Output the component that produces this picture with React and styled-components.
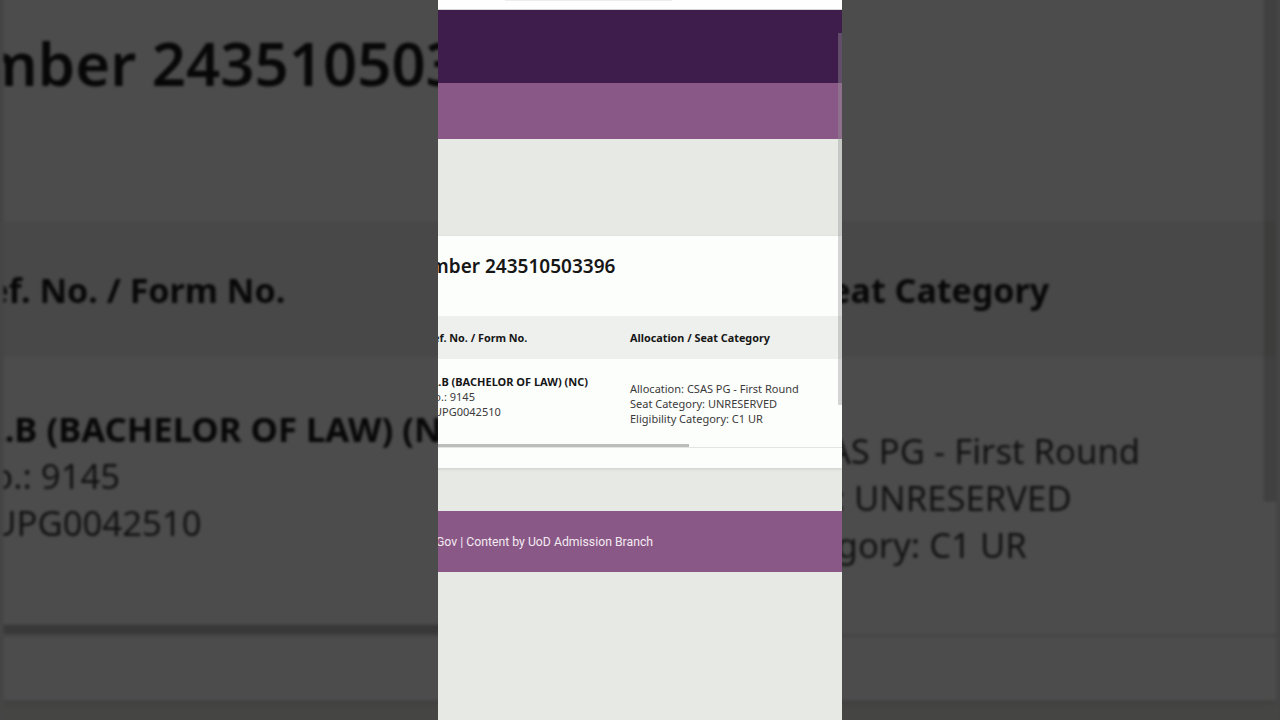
import React from 'react';
import styled, { createGlobalStyle } from 'styled-components';

// Seat allocation page, shown as a phone recording: a sharp column in the
// middle and the same column blown up and dimmed behind it.

const allocation = {
  formNumber: '243510503396',
  course: 'LL.B (BACHELOR OF LAW) (NC)',
  refNo: '9145',
  formNo: 'DUPG0042510',
  round: 'CSAS PG - First Round',
  seatCategory: 'UNRESERVED',
  eligibility: 'C1 UR',
};

const GlobalStyle = createGlobalStyle`
  html, body {
    margin: 0;
    padding: 0;
    background: #454545;
  }
  body {
    font-family: "Noto Sans", "DejaVu Sans", sans-serif;
  }
`;

const Frame = styled.div`
  width: 1280px;
  height: 720px;
  overflow: hidden;
  display: grid;
  background: #454545;

  & > * {
    grid-area: 1 / 1;
  }
`;

// blurred, dimmed copy filling the sides of the recording
const Backdrop = styled.div`
  justify-self: center;
  align-self: center;
  transform: scale(3.15);
  filter: brightness(0.3) blur(0.5px);
`;

const Foreground = styled.div`
  justify-self: center;
  align-self: start;
`;

// visible part of the phone screen; the page is wider and cut on the left
const Viewport = styled.div`
  position: relative;
  width: 404px;
  height: 720px;
  overflow: hidden;
  display: flex;
  justify-content: flex-end;
`;

const Page = styled.div`
  flex-shrink: 0;
  width: 508px;
  min-height: 720px;
  display: flex;
  flex-direction: column;
  background: #e6e9e4;
`;

const TopStrip = styled.div`
  height: 9px;
  background: #fdfefd;
  border-bottom: 1px solid #d6d8d5;
  display: flex;
  justify-content: center;
`;

const AddressEdge = styled.div`
  width: 167px;
  height: 1px;
  background: #eceeeb;
`;

const Masthead = styled.div`
  height: 73px;
  background: #3e1c4c;
`;

const NavBar = styled.div`
  height: 56px;
  background: #8a5886;
`;

const Main = styled.main`
  padding: 97px 0 43px;
`;

const Card = styled.section`
  background: #fcfefc;
  padding: 16px 0 20px 16px;
  box-shadow: 0 1px 3px rgba(0, 0, 0, 0.12);
`;

const Title = styled.h2`
  margin: 0 0 36px;
  font-size: 19px;
  line-height: 28px;
  font-weight: 600;
  color: #161616;
  white-space: nowrap;
`;

const Table = styled.div`
  border-bottom: 1px solid #e3e5e2;
`;

const Row = styled.div`
  display: grid;
  grid-template-columns: 76px 204px 1fr;
  align-items: center;
  min-height: ${p => (p.$head ? '43px' : '85px')};
  background: ${p => (p.$head ? '#edf0ec' : 'transparent')};
`;

const HeadCell = styled.div`
  font-size: 10.8px;
  font-weight: 700;
  color: #161616;
  white-space: nowrap;
`;

const Cell = styled.div`
  align-self: ${p => (p.$top ? 'start' : 'center')};
  padding-top: ${p => (p.$top ? '14.5px' : '4px')};
  font-size: 11px;
  line-height: 15px;
  color: #3a3a3a;
  white-space: nowrap;
`;

const Strong = styled.div`
  font-weight: 700;
  color: #161616;
`;

const ScrollTrack = styled.div`
  height: 3px;
`;

const ScrollThumb = styled.div`
  width: 339px;
  height: 100%;
  background: #bcbcbc;
`;

const Footer = styled.footer`
  height: 61px;
  display: flex;
  align-items: center;
  padding-left: 10px;
  background: #8a5886;
  color: #f3eaf2;
  font-family: Roboto, "Noto Sans", sans-serif;
  font-size: 12.25px;
  white-space: nowrap;
`;

const Filler = styled.div`
  flex: 1;
`;

// page scroll indicator, drawn over the right edge
const PageScrollbar = styled.div`
  position: absolute;
  top: 33px;
  right: 0;
  width: 4px;
  height: 372px;
  background: rgba(150, 150, 150, 0.4);
`;

const Screen = () => (
  <Viewport>
    <Page>
      <TopStrip>
        <AddressEdge />
      </TopStrip>
      <Masthead />
      <NavBar />
      <Main>
        <Card>
          <Title>Form Number {allocation.formNumber}</Title>
          <Table>
            <Row $head>
              <HeadCell>S.No.</HeadCell>
              <HeadCell>Ref. No. / Form No.</HeadCell>
              <HeadCell>Allocation / Seat Category</HeadCell>
            </Row>
            <Row>
              <Cell $top>1</Cell>
              <Cell $top>
                <Strong>{allocation.course}</Strong>
                <div>No.: {allocation.refNo}</div>
                <div>{allocation.formNo}</div>
              </Cell>
              <Cell>
                <div>Allocation: {allocation.round}</div>
                <div>Seat Category: {allocation.seatCategory}</div>
                <div>Eligibility Category: {allocation.eligibility}</div>
              </Cell>
            </Row>
            <ScrollTrack>
              <ScrollThumb />
            </ScrollTrack>
          </Table>
        </Card>
      </Main>
      <Footer>Powered by DU eGov | Content by UoD Admission Branch</Footer>
      <Filler />
    </Page>
    <PageScrollbar />
  </Viewport>
);

export default function App() {
  return (
    <>
      <GlobalStyle />
      <Frame>
        <Backdrop aria-hidden="true">
          <Screen />
        </Backdrop>
        <Foreground>
          <Screen />
        </Foreground>
      </Frame>
    </>
  );
}
